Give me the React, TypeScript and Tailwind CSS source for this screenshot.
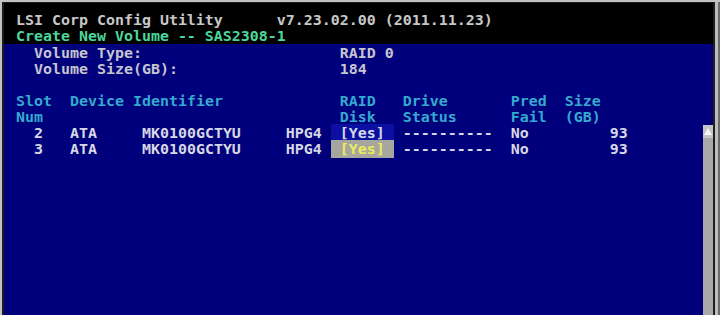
type Seg = [number, string, string?];

const line = (segs: Seg[]) => {
  let col = 0;
  const out: React.ReactNode[] = [];
  segs.forEach(([at, text, cls], i) => {
    if (at > col) {
      out.push(" ".repeat(at - col));
      col = at;
    }
    out.push(
      <span key={i} className={cls}>
        {text}
      </span>
    );
    col += text.length;
  });
  return out;
};

const hdr = "text-[#34aacd]";
const data = "text-[#d6d8e4]";

const rows: { slot: string; hl: string }[] = [
  { slot: "2", hl: "bg-[#0b10a2] text-[#d6d8e4]" },
  { slot: "3", hl: "bg-[#a6a69e] text-[#ecec5c]" },
];

export default function App() {
  return (
    <div className="w-[720px] h-[315px] bg-[#c2c2c2] pl-[2px] pt-[2px] flex overflow-hidden">
      <div
        className="flex-1 flex flex-col bg-black border-l-2 border-t border-[#1c1c1c] text-[14.95px] leading-[16px] font-bold whitespace-pre"
        style={{ fontFamily: '"DejaVu Sans Mono", "Liberation Mono", monospace' }}
      >
        <div className="h-[41px] pt-[9px] pl-[12px]">
          <div className="text-[#c8c8c8]">
            {line([
              [0, "LSI Corp Config Utility"],
              [29, "v7.23.02.00 (2011.11.23)"],
            ])}
          </div>
          <div className="text-[#4cd69c]">Create New Volume -- SAS2308-1</div>
        </div>
        <div className="flex-1 flex bg-[#00007c]">
          <div className="flex-1 pt-[1px] pl-[12px]">
            <div className="text-[#c6c6ce]">
              {line([
                [2, "Volume Type:"],
                [36, "RAID 0"],
              ])}
            </div>
            <div className="text-[#c6c6ce]">
              {line([
                [2, "Volume Size(GB):"],
                [36, "184"],
              ])}
            </div>
            <div className="h-[16px]" />
            <div className={hdr}>
              {line([
                [0, "Slot"],
                [6, "Device"],
                [13, "Identifier"],
                [36, "RAID"],
                [43, "Drive"],
                [55, "Pred"],
                [61, "Size"],
              ])}
            </div>
            <div className={hdr}>
              {line([
                [0, "Num"],
                [36, "Disk"],
                [43, "Status"],
                [55, "Fail"],
                [61, "(GB)"],
              ])}
            </div>
            {rows.map((r) => (
              <div key={r.slot} className={data}>
                {line([
                  [2, r.slot],
                  [6, "ATA"],
                  [14, "MK0100GCTYU"],
                  [30, "HPG4"],
                  [35, " [Yes] ", r.hl],
                  [43, "----------"],
                  [55, "No"],
                  [66, "93"],
                ])}
              </div>
            ))}
          </div>
          <div className="w-[10px] pt-[81px] flex flex-col">
            <div className="flex-1 flex flex-col bg-[#a9a9a9]">
              <div className="h-[13px] bg-[#c4c4c4] flex items-center justify-center">
                <svg width="8" height="7" viewBox="0 0 8 7">
                  <path d="M4 0 L8 7 L0 7 Z" fill="#f4f4f4" />
                </svg>
              </div>
            </div>
          </div>
        </div>
      </div>
      <div className="w-[7px] flex">
        <div className="w-[2px] bg-[#1e1e1e]" />
        <div className="w-[3px] bg-[#bcbcbc]" />
        <div className="w-[2px] bg-[#6a6a6a]" />
      </div>
    </div>
  );
}
